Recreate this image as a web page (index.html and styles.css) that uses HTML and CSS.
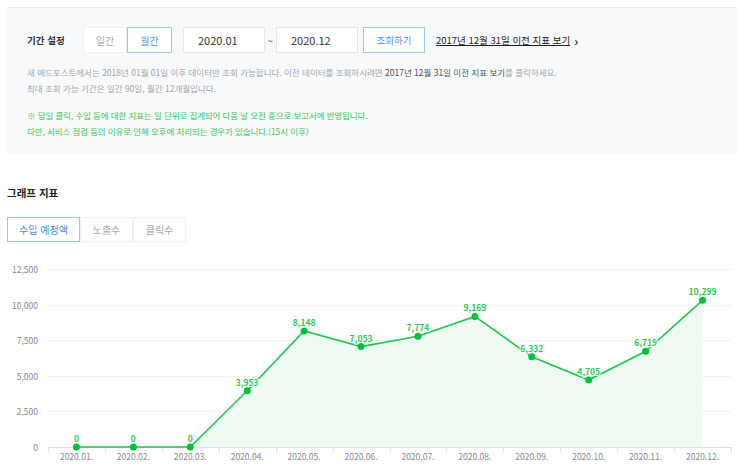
FILE: index.html
```html
<!doctype html>
<html lang="ko">
  <head>
    <meta charset="UTF-8" />
    <meta name="viewport" content="width=device-width, initial-scale=1.0" />
    <title>리포트 - 애드포스트</title>
    <link rel="stylesheet" href="styles.css">
  </head>
  <body>
    <div class="period-panel">
      <div class="period-row">
        <span class="period-label">기간 설정</span>
        <div class="toggle">
          <button class="toggle-btn">일간</button>
          <button class="toggle-btn active">월간</button>
        </div>
        <input class="date-input" type="text" value="2020.01" />
        <span class="tilde">~</span>
        <input class="date-input" type="text" value="2020.12" />
        <button class="search-btn">조회하기</button>
        <a class="old-link" href="#">2017년 12월 31일 이전 지표 보기</a>
        <span class="old-arrow">›</span>
      </div>

      <p class="info">
        새 애드포스트에서는 2018년 01월 01일 이후 데이터만 조회 가능합니다. 이전 데이터를 조회하시려면 <strong>2017년 12월 31일 이전 지표 보기</strong>를 클릭하세요.<br />
        최대 조회 가능 기간은 일간 90일, 월간 12개월입니다.
      </p>

      <p class="notice">
        ※ 당일 클릭, 수입 등에 대한 지표는 일 단위로 집계되어 다음 날 오전 중으로 보고서에 반영됩니다.<br />
        다만, 서비스 점검 등의 이유로 인해 오후에 처리되는 경우가 있습니다.(15시 이후)
      </p>
    </div>

    <h2 class="section-title">그래프 지표</h2>

    <div class="tabs">
      <button class="tab active">수입 예정액</button>
      <button class="tab">노출수</button>
      <button class="tab">클릭수</button>
    </div>

    <div class="chart">
      <svg id="chart" width="730" height="213" viewBox="7 257 730 213"></svg>
    </div>

    <script>
      // monthly revenue data
      const data = [0, 0, 0, 3953, 8148, 7053, 7774, 9169, 6332, 4705, 6719, 10299]
      const plot = { left: 48, right: 731, top: 269, bottom: 447, max: 12500 }
      const step = (plot.right - plot.left) / data.length
      const svg = document.getElementById('chart')
      const ns = 'http://www.w3.org/2000/svg'

      function el(name, attrs, text) {
        const node = document.createElementNS(ns, name)
        for (const key in attrs) node.setAttribute(key, attrs[key])
        if (text !== undefined) node.textContent = text
        svg.appendChild(node)
        return node
      }

      const yOf = (v) => plot.bottom - (v / plot.max) * (plot.bottom - plot.top)
      const xOf = (i) => plot.left + step * (i + 0.5)
      const fmt = (v) => v.toLocaleString('en-US')

      // grid lines and y labels
      for (let v = 0; v <= plot.max; v += 2500) {
        const y = Math.round(yOf(v)) + 0.5
        if (v > 0) el('line', { x1: plot.left, x2: plot.right, y1: y, y2: y, class: 'grid' })
        el('text', { x: 38, y: y + 3, class: 'y-label' }, fmt(v))
      }

      // x axis
      const axisY = plot.bottom + 0.5
      el('line', { x1: plot.left, x2: plot.right, y1: axisY, y2: axisY, class: 'axis' })
      for (let i = 0; i <= data.length; i++) {
        const x = Math.round(plot.left + step * i) + 0.5
        el('line', { x1: x, x2: x, y1: plot.bottom, y2: plot.bottom + 6, class: 'axis' })
      }
      data.forEach((v, i) => {
        const m = String(i + 1).padStart(2, '0')
        el('text', { x: xOf(i), y: plot.bottom + 13, class: 'x-label' }, '2020.' + m + '.')
      })

      // area and line
      const pts = data.map((v, i) => xOf(i).toFixed(1) + ',' + yOf(v).toFixed(1))
      const last = xOf(data.length - 1).toFixed(1)
      el('polygon', {
        points: xOf(0).toFixed(1) + ',' + plot.bottom + ' ' + pts.join(' ') + ' ' + last + ',' + plot.bottom,
        class: 'area',
      })
      el('polyline', { points: pts.join(' '), class: 'line' })

      data.forEach((v, i) => {
        el('circle', { cx: xOf(i), cy: yOf(v), r: 3.5, class: 'dot' })
        el('text', { x: xOf(i), y: yOf(v) - 5, class: 'value' }, fmt(v))
      })
    </script>
  </body>
</html>
```

FILE: styles.css
```css
* {
  margin: 0;
  padding: 0;
  box-sizing: border-box;
}

body {
  font-family: 'Noto Sans CJK KR', 'Noto Sans', sans-serif;
  background: #fff;
  color: #333;
  padding: 7px 6px 0 7px;
}

button,
input {
  font-family: inherit;
}

.period-panel {
  background: #f8f9fb;
  border-top: 1px solid #e8eaed;
  padding: 19px 20px 16px;
}

.period-row {
  display: flex;
  align-items: center;
  height: 26px;
}

.period-label {
  width: 56px;
  font-size: 9.5px;
  font-weight: bold;
  color: #333;
}

.toggle {
  display: flex;
  margin-right: 11px;
}

.toggle-btn {
  width: 44px;
  height: 26px;
  background: #fff;
  border: 1px solid #eef0f2;
  color: #aaa;
  font-size: 10px;
}

.toggle-btn.active {
  width: 45px;
  border-color: #9cc6f6;
  color: #4a8ff0;
}

.date-input {
  width: 82px;
  height: 26px;
  background: #fff;
  border: 1px solid #e4e7ea;
  padding-left: 14px;
  font-size: 11px;
  color: #333;
}

.tilde {
  width: 11px;
  text-align: center;
  font-size: 10px;
  color: #666;
}

.search-btn {
  width: 62px;
  height: 26px;
  margin-left: 5px;
  background: #fff;
  border: 1px solid #9cc6f6;
  color: #4a8ff0;
  font-size: 9.5px;
}

.old-link {
  margin-left: 11px;
  font-size: 9.5px;
  color: #222;
  text-decoration: underline;
}

.old-arrow {
  margin-left: 4px;
  font-size: 12px;
  font-weight: bold;
  color: #222;
}

.info {
  margin-top: 11px;
  font-size: 8.5px;
  line-height: 16px;
  color: #a3a6aa;
}

.info strong {
  font-weight: normal;
  color: #555;
}

.notice {
  margin-top: 11px;
  font-size: 8.5px;
  letter-spacing: -0.1px;
  line-height: 16px;
  color: #35c85a;
}

.section-title {
  margin-top: 30px;
  font-size: 10.5px;
  font-weight: bold;
  line-height: 16px;
  color: #222;
}

.tabs {
  display: flex;
  margin-top: 16px;
}

.tab {
  width: 53px;
  height: 25px;
  background: #fff;
  border: 1px solid #eef0f2;
  color: #aaa;
  font-size: 10px;
}

.tab.active {
  width: 73px;
  border-color: #9cc6f6;
  color: #4a8ff0;
}

.chart {
  margin-top: 15px;
}

.chart svg {
  display: block;
  font-family: 'Noto Sans CJK KR', 'Noto Sans', sans-serif;
}

.grid {
  stroke: #eef0f3;
  stroke-width: 1;
}

.axis {
  stroke: #d8e0ec;
  stroke-width: 1;
}

.y-label {
  font-size: 8.5px;
  fill: #888;
  text-anchor: end;
}

.x-label {
  font-size: 8.5px;
  fill: #888;
  text-anchor: middle;
}

.area {
  fill: #effbf2;
}

.line {
  fill: none;
  stroke: #1ec84a;
  stroke-width: 1.6;
}

.dot {
  fill: #00c23a;
}

.value {
  font-size: 8.5px;
  font-weight: bold;
  fill: #2bc955;
  text-anchor: middle;
  stroke: #fff;
  stroke-width: 2px;
  paint-order: stroke;
}
```
